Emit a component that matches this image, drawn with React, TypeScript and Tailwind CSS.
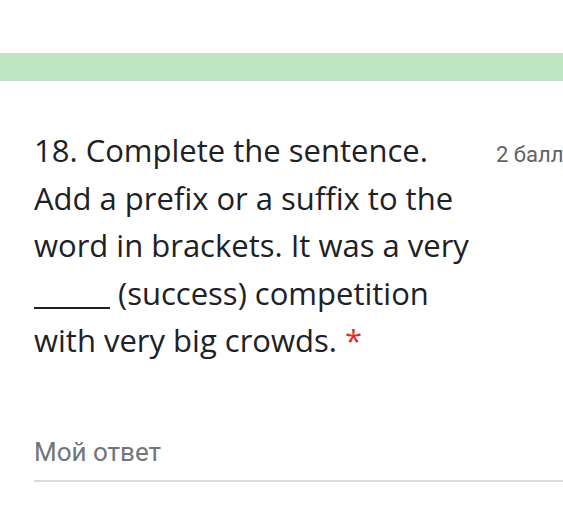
export default function App() {
  return (
    <div className="min-h-[531px] w-[563px] overflow-hidden bg-white">
      <div className="h-[53px]" />
      <div className="h-[28px] border-y-2 border-[#c9dcca] bg-[#bde5c0]" />
      <div className="flex pl-[34px] pt-[46px]">
        <div
          className="w-[446px] shrink-0 text-[31px] leading-[47.5px] text-[#202124]"
          style={{ fontFamily: '"Open Sans", sans-serif' }}
        >
          18. Complete the sentence.
          <br />
          Add a prefix or a suffix to the
          <br />
          word in brackets. It was a very
          <br />
          <span className="inline-block h-[2px] w-[76px] bg-[#202124] align-[-4px]" /> (success) competition
          <br />
          with very big crowds. <span className="text-[#d93025]">*</span>
        </div>
        <div
          className="shrink-0 whitespace-nowrap pl-[16px] pt-[13px] text-[22px] leading-[30px] text-[#5f6368]"
          style={{ fontFamily: 'Roboto, sans-serif' }}
        >
          2 балла
        </div>
      </div>
      <div className="ml-[34px] mt-[72px]">
        <div
          className="pb-[13px] text-[26px] leading-[30px] text-[#70757a]"
          style={{ fontFamily: 'Roboto, sans-serif' }}
        >
          Мой ответ
        </div>
        <div className="h-[2px] bg-[#dadce0]" />
      </div>
    </div>
  );
}
